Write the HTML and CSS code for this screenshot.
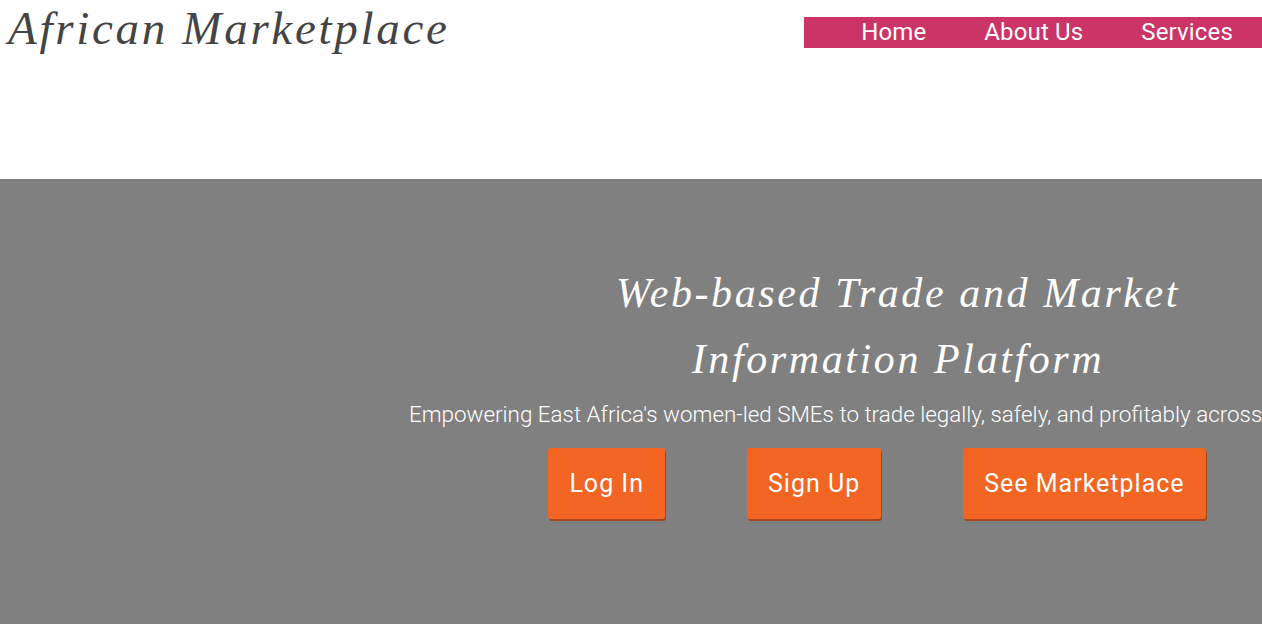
FILE: index.html
```html
<!DOCTYPE html>
<html lang="en">
<head>
<meta charset="utf-8">
<title>African Marketplace</title>
<link rel="stylesheet" href="styles.css">
</head>
<body>
<header class="site-header">
  <h1 class="logo">African Marketplace</h1>
  <nav class="main-nav">
    <a href="#" class="nav-link">Home</a>
    <a href="#" class="nav-link">About Us</a>
    <a href="#" class="nav-link">Services</a>
  </nav>
</header>
<section class="hero">
  <div class="hero-inner">
    <h2 class="hero-title">Web-based Trade and Market<br>Information Platform</h2>
    <p class="hero-sub">Empowering East Africa's women-led SMEs to trade legally, safely, and profitably across borders.</p>
    <div class="hero-actions">
      <a href="#" class="btn">Log In</a>
      <a href="#" class="btn">Sign Up</a>
      <a href="#" class="btn">See Marketplace</a>
    </div>
  </div>
</section>
</body>
</html>
```

FILE: styles.css
```css
html, body {
  margin: 0;
  padding: 0;
  overflow-x: hidden;
  background: #ffffff;
}

body {
  font-family: Roboto, "Liberation Sans", sans-serif;
}

.site-header {
  display: flex;
  justify-content: space-between;
  align-items: flex-start;
  height: 179px;
}

.logo {
  margin: 0;
  padding: 0 0 0 8px;
  font-family: "Liberation Serif", serif;
  font-style: italic;
  font-weight: normal;
  font-size: 47px;
  line-height: 56px;
  letter-spacing: 2.7px;
  color: #444444;
}

.main-nav {
  display: flex;
  gap: 58px;
  margin-top: 17px;
  height: 31px;
  align-items: center;
  padding: 0 29px 0 57px;
  background: #cc3366;
}

.nav-link {
  font-size: 24px;
  line-height: 31px;
  letter-spacing: 0.15px;
  color: #ffffff;
  text-decoration: none;
}

.hero {
  background: #808080;
  height: 445px;
  padding-top: 81px;
  box-sizing: border-box;
}

.hero-inner {
  margin-left: 409px;
  width: 936px;
  display: flex;
  flex-direction: column;
  align-items: center;
}

.hero-title {
  margin: 0;
  padding-left: 42px;
  font-family: "Liberation Serif", serif;
  font-style: italic;
  font-weight: normal;
  font-size: 42px;
  line-height: 66px;
  letter-spacing: 2.6px;
  color: #ffffff;
  text-align: center;
}

.hero-sub {
  margin: 7px 0 0;
  align-self: flex-start;
  font-size: 22.4px;
  font-weight: 300;
  line-height: 30px;
  color: #ffffff;
  white-space: nowrap;
}

.hero-actions {
  display: flex;
  gap: 82px;
  margin-top: 19px;
}

.btn {
  display: flex;
  align-items: center;
  height: 71px;
  padding: 0 21px;
  box-sizing: border-box;
  background: #f26522;
  border-radius: 3px;
  box-shadow: 1px 2px 0 #a8451a;
  color: #ffffff;
  font-size: 25px;
  letter-spacing: 1px;
  text-decoration: none;
}
```
